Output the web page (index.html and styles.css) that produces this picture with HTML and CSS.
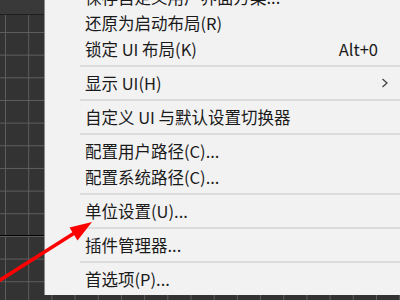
FILE: index.html
```html
<!DOCTYPE html>
<html lang="zh-CN">
<head>
<meta charset="utf-8">
<title>Menu</title>
<link rel="stylesheet" href="styles.css">
</head>
<body>
<div class="scene">
  <div class="topbar"></div>
  <div class="viewport"><div class="axis"></div></div>

  <div class="menu">
    <div class="item"><span class="label">保存自定义用户界面方案...</span></div>
    <div class="item"><span class="label">还原为启动布局(R)</span></div>
    <div class="item"><span class="label">锁定 UI 布局(K)</span><span class="key">Alt+0</span></div>
    <div class="sep"></div>
    <div class="item"><span class="label">显示 UI(H)</span><svg class="sub" width="14" height="10" viewBox="0 0 14 10" aria-hidden="true"><polyline points="4.5,1 9,5 4.5,9" fill="none" stroke="#444" stroke-width="1.3"/></svg></div>
    <div class="sep"></div>
    <div class="item"><span class="label">自定义 UI 与默认设置切换器</span></div>
    <div class="sep"></div>
    <div class="item"><span class="label">配置用户路径(C)...</span></div>
    <div class="item"><span class="label">配置系统路径(C)...</span></div>
    <div class="sep"></div>
    <div class="item"><span class="label">单位设置(U)...</span></div>
    <div class="sep"></div>
    <div class="item"><span class="label">插件管理器...</span></div>
    <div class="sep"></div>
    <div class="item"><span class="label">首选项(P)...</span></div>
  </div>

  <svg class="arrow" width="400" height="300" viewBox="0 0 400 300" aria-hidden="true">
    <line x1="-6" y1="284" x2="76" y2="232" stroke="#ff0000" stroke-width="3.5"/>
    <polygon points="92,222 69.5,227.5 77.5,240.5" fill="#ff0000"/>
  </svg>
</div>
</body>
</html>
```

FILE: styles.css
```css
html, body {
  margin: 0;
  padding: 0;
}
body {
  width: 400px;
  height: 300px;
  overflow: hidden;
  background: #333333;
  font-family: "Noto Sans CJK SC", "Noto Sans", sans-serif;
}
.scene {
  position: relative;
  width: 400px;
  height: 300px;
  overflow: hidden;
}
.topbar {
  height: 14px;
  background: #393939;
  border-bottom: 1px solid #1f1f1f;
}
.viewport {
  height: 285px;
  padding-top: 220px;
  box-sizing: border-box;
  background-color: #333333;
  background-image:
    linear-gradient(to right, #5e5e5e 1px, transparent 1px),
    linear-gradient(to bottom, #5e5e5e 1px, transparent 1px);
  background-size: 23.2px 22.67px;
  background-position: 5px 17px;
}
.axis {
  height: 1px;
  background: #050505;
}
.menu {
  position: absolute;
  left: 44px;
  top: -19px;
  width: 370px;
  padding: 3px 0;
  background: #f2f2f2;
  border-left: 1px solid #8a8a8a;
  box-sizing: border-box;
  color: #1a1a1a;
  font-size: 16.5px;
}
.item {
  height: 26px;
  line-height: 26px;
  display: flex;
  align-items: center;
  padding-left: 40px;
  padding-right: 22px;
  white-space: nowrap;
}
.label {
  flex: 1;
}
.key {
  padding-right: 14px;
}
.sub {
  display: block;
  width: 14px;
  height: 10px;
}
.sep {
  height: 2px;
  margin: 3px 0 3px 35px;
  background: #dcdcdc;
}
.arrow {
  position: absolute;
  left: 0;
  top: 0;
}
```
